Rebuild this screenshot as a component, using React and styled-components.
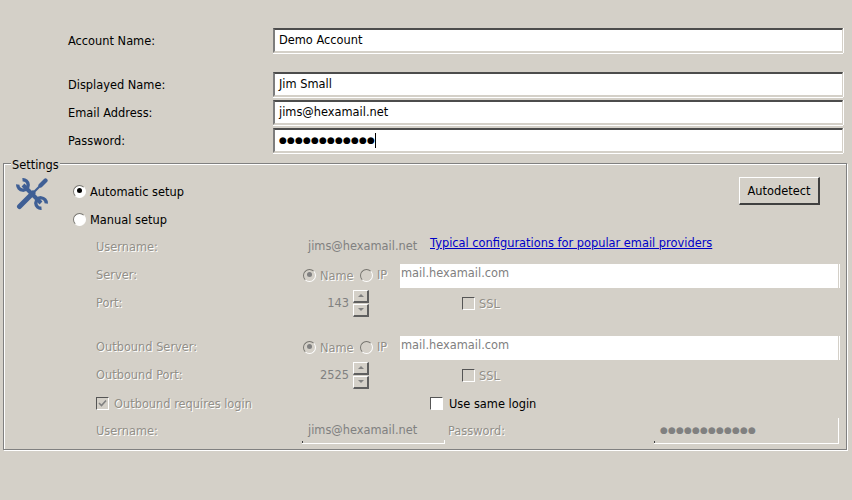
import styled, { createGlobalStyle } from 'styled-components'

const GlobalStyle = createGlobalStyle`
    html, body {
        margin: 0;
        padding: 0;
        background: #d4d0c8;
    }
    body {
        font-family: "DejaVu Sans", "Liberation Sans", sans-serif;
        font-size: 11.4px;
        color: #000;
    }
`

const Page = styled.div`
    width: 852px;
    height: 500px;
    box-sizing: border-box;
    padding: 28px 5px 0 3px;
    overflow: hidden;
`

const TopRow = styled.div`
    display: flex;
    align-items: center;
    height: 25px;
    padding-left: 65px;
    margin-bottom: ${p => p.$gap || 3}px;
`

const TopLabel = styled.div`
    width: 205px;
    flex-shrink: 0;
`

const Field = styled.div`
    box-sizing: border-box;
    width: 570px;
    height: 25px;
    padding: 0 0 1px 4px;
    display: flex;
    align-items: center;
    background: #fff;
    border-style: solid;
    border-width: 2px 1px 2px 2px;
    border-color: #4c4c4c #d4d0c8 #d4d0c8 #7d7d7d;
    box-shadow: 0 1px 0 #fff, 1px 0 0 #fff;
`

const Dots = styled.span`
    font-size: 9px;
    line-height: 1;
    letter-spacing: ${p => p.$spacing}px;
    color: ${p => p.$color || '#000'};
`

const Caret = styled.span`
    width: 1px;
    height: 15px;
    background: #000;
`

const Settings = styled.fieldset`
    display: flex;
    margin: 3px 0 0;
    padding: 7px 8px 4px 12px;
    min-width: 0;
    border: 1px solid #808080;
    box-shadow: 1px 1px 0 #fff, inset 1px 1px 0 #fff;
`

const Legend = styled.legend`
    margin-left: -5px;
    padding: 2px 1px 0;
    height: 12px;
    line-height: 14px;
    background: #d4d0c8;
`

const SettingsBody = styled.div`
    display: flex;
    align-items: flex-start;
`

const ToolIcon = styled.svg`
    width: 32px;
    height: 32px;
    margin: 1px 25px 0 0;
    flex-shrink: 0;
`

const Rows = styled.div`
    width: 765px;
`

const Row = styled.div`
    display: flex;
    align-items: center;
    height: 28px;
    padding-left: ${p => p.$indent ? 23 : 0}px;
    margin-top: ${p => p.$gap || 0}px;
`

const Label = styled.label`
    width: ${p => p.$width ? `${p.$width}px` : 'auto'};
    flex-shrink: 0;
    margin-left: ${p => p.$left || 0}px;
    padding-top: ${p => p.$control ? 2 : 0}px;
    color: ${p => p.$disabled ? '#928f88' : '#000'};
    text-shadow: ${p => p.$disabled ? '1px 1px 0 #fff' : 'none'};
`

const Value = styled.div`
    flex-shrink: 0;
    color: #808080;
    width: ${p => p.$width}px;
    margin-left: ${p => p.$left || 0}px;
    margin-bottom: ${p => p.$lift || 0}px;
    text-align: ${p => p.$right ? 'right' : 'left'};
`

const Radio = styled.span`
    box-sizing: border-box;
    position: relative;
    display: block;
    flex-shrink: 0;
    width: 13px;
    height: 13px;
    margin-left: ${p => p.$left || 0}px;
    margin-right: 4px;
    border-radius: 50%;
    border: 1.5px solid;
    border-color: #77756f #fff #fff #77756f;
    background: ${p => p.$disabled ? '#d4d0c8' : '#fff'};
    &::after {
        content: '';
        display: ${p => p.$checked ? 'block' : 'none'};
        position: absolute;
        left: 2.5px;
        top: 2.5px;
        width: 5px;
        height: 5px;
        border-radius: 50%;
        background: ${p => p.$disabled ? '#808080' : '#000'};
    }
`

const Check = styled.span`
    box-sizing: border-box;
    display: flex;
    align-items: center;
    justify-content: center;
    flex-shrink: 0;
    width: 13px;
    height: 13px;
    margin-left: ${p => p.$left || 0}px;
    margin-right: ${p => p.$right || 4}px;
    border-style: solid;
    border-width: 1px;
    border-color: #555 #fff #fff #555;
    background: ${p => p.$disabled ? '#d4d0c8' : '#fff'};
`

const Autodetect = styled.button`
    box-sizing: border-box;
    width: 81px;
    height: 28px;
    margin: 0 18px 0 auto;
    padding: 0;
    font: inherit;
    color: #000;
    background: #d4d0c8;
    border-style: solid;
    border-width: 1px 2px 2px 1px;
    border-color: #fff #404040 #404040 #fff;
`

const ProviderLink = styled.a`
    margin: 0 0 8px 12px;
    color: #0000c8;
    text-decoration: underline;
`

const HostField = styled.div`
    box-sizing: border-box;
    width: 438px;
    height: 24px;
    margin-top: 2px;
    padding: 0 0 7px 1px;
    display: flex;
    align-items: center;
    flex-shrink: 0;
    color: #808080;
    background: #fff;
    box-shadow: 1px 0 0 #d4d0c8, 2px 0 0 #fff;
`

const Spinner = styled.div`
    display: flex;
    flex-direction: column;
    flex-shrink: 0;
    gap: 1px;
    width: 16px;
    margin-left: 4px;
`

const SpinButton = styled.div`
    box-sizing: border-box;
    height: 13px;
    display: flex;
    align-items: center;
    justify-content: center;
    border-style: solid;
    border-width: 1px 2px 2px 1px;
    border-color: #fff #5f5f5f #5f5f5f #fff;
    &::after {
        content: '';
        border-left: 3px solid transparent;
        border-right: 3px solid transparent;
        border-${p => p.$down ? 'top' : 'bottom'}: 3px solid #808080;
    }
`

const SunkenValue = styled.div`
    box-sizing: border-box;
    flex-shrink: 0;
    position: relative;
    width: ${p => p.$width}px;
    height: 26px;
    padding: 0 0 1px ${p => p.$pad}px;
    display: flex;
    align-items: center;
    color: #808080;
    border-bottom: 1px solid #fff;
    &::before {
        content: '';
        position: absolute;
        left: 0;
        bottom: 0;
        width: 1px;
        height: 2px;
        background: #404040;
    }
    &::after {
        content: '';
        position: absolute;
        right: 0;
        bottom: 0;
        width: 1px;
        height: ${p => p.$tick}px;
        background: #fff;
    }
`

const App = () => {
    return <Page>
        <GlobalStyle />
        <TopRow $gap={19}>
            <TopLabel>Account Name:</TopLabel>
            <Field>Demo Account</Field>
        </TopRow>
        <TopRow>
            <TopLabel>Displayed Name:</TopLabel>
            <Field>Jim Small</Field>
        </TopRow>
        <TopRow>
            <TopLabel>Email Address:</TopLabel>
            <Field>jims@hexamail.net</Field>
        </TopRow>
        <TopRow $gap={0}>
            <TopLabel>Password:</TopLabel>
            <Field>
                <Dots $spacing={0.15}>●●●●●●●●●●●●</Dots>
                <Caret />
            </Field>
        </TopRow>

        <Settings>
            <Legend>Settings</Legend>
            <SettingsBody>
                <ToolIcon viewBox="0 0 32 32" fill="none" stroke="#3f5f95" strokeLinecap="round">
                    <path d="M7 7 L25 25" strokeWidth="4" strokeLinecap="butt" />
                    <path d="M1.8 6.5 A5.2 5.2 0 1 0 6.5 1.8" strokeWidth="3.4" strokeLinecap="butt" />
                    <path d="M30.2 25.5 A5.2 5.2 0 1 0 25.5 30.2" strokeWidth="3.4" strokeLinecap="butt" />
                    <path d="M3.5 28.5 L17 15" strokeWidth="5" />
                    <path d="M17 15 L24 8" strokeWidth="2.2" />
                    <path d="M24.5 7.5 L29.5 2.5" strokeWidth="4.2" />
                </ToolIcon>
                <Rows>
                    <Row>
                        <Radio $checked />
                        <Label $control>Automatic setup</Label>
                        <Autodetect>Autodetect</Autodetect>
                    </Row>
                    <Row>
                        <Radio />
                        <Label $control>Manual setup</Label>
                    </Row>
                    <Row $indent>
                        <Label $disabled $width={212}>Username:</Label>
                        <Value $width={110} $lift={2}>jims@hexamail.net</Value>
                        <ProviderLink href="#">Typical configurations for popular email providers</ProviderLink>
                    </Row>
                    <Row $indent>
                        <Label $disabled $width={207}>Server:</Label>
                        <Radio $disabled $checked />
                        <Label $disabled $control $width={40}>Name</Label>
                        <Radio $disabled />
                        <Label $disabled $width={23}>IP</Label>
                        <HostField>mail.hexamail.com</HostField>
                    </Row>
                    <Row $indent>
                        <Label $disabled $width={204}>Port:</Label>
                        <Value $width={49} $right>143</Value>
                        <Spinner>
                            <SpinButton />
                            <SpinButton $down />
                        </Spinner>
                        <Check $disabled $left={93} />
                        <Label $disabled $control>SSL</Label>
                    </Row>
                    <Row $indent $gap={16}>
                        <Label $disabled $width={207}>Outbound Server:</Label>
                        <Radio $disabled $checked />
                        <Label $disabled $control $width={40}>Name</Label>
                        <Radio $disabled />
                        <Label $disabled $width={23}>IP</Label>
                        <HostField>mail.hexamail.com</HostField>
                    </Row>
                    <Row $indent>
                        <Label $disabled $width={204}>Outbound Port:</Label>
                        <Value $width={49} $right>2525</Value>
                        <Spinner>
                            <SpinButton />
                            <SpinButton $down />
                        </Spinner>
                        <Check $disabled $left={93} />
                        <Label $disabled $control>SSL</Label>
                    </Row>
                    <Row $indent>
                        <Check $disabled $right={5}>
                            <svg width="9" height="9" viewBox="0 0 9 9" fill="none" stroke="#808080" strokeWidth="1.6">
                                <path d="M1 4 L3.5 6.5 L8 1.5" />
                            </svg>
                        </Check>
                        <Label $disabled $control $width={316}>Outbound requires login</Label>
                        <Check $right={6} />
                        <Label $control>Use same login</Label>
                    </Row>
                    <Row $indent>
                        <Label $disabled $width={206}>Username:</Label>
                        <SunkenValue $width={143} $pad={6} $tick={3}>jims@hexamail.net</SunkenValue>
                        <Label $disabled $width={206} $left={3}>Password:</Label>
                        <SunkenValue $width={185} $pad={6} $tick={25}>
                            <Dots $spacing={0.15} $color="#808080">●●●●●●●●●●●●</Dots>
                        </SunkenValue>
                    </Row>
                </Rows>
            </SettingsBody>
        </Settings>
    </Page>
}

export default App
